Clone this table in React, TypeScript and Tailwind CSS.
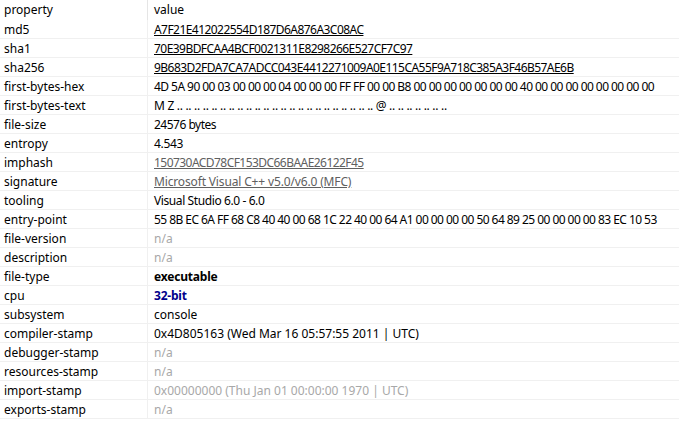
import React from "react";

type Row = { k: string; v: string; cls?: string };

const HEX = "tracking-[-0.55px]";
const NA = "text-[#a8a8a8]";

const rows: Row[] = [
  { k: "md5", v: "A7F21E412022554D187D6A876A3C08AC", cls: `underline text-black ${HEX}` },
  { k: "sha1", v: "70E39BDFCAA4BCF0021311E8298266E527CF7C97", cls: `underline text-black ${HEX}` },
  { k: "sha256", v: "9B683D2FDA7CA7ADCC043E4412271009A0E115CA55F9A718C385A3F46B57AE6B", cls: `underline text-black ${HEX}` },
  { k: "first-bytes-hex", v: "4D 5A 90 00 03 00 00 00 04 00 00 00 FF FF 00 00 B8 00 00 00 00 00 00 00 40 00 00 00 00 00 00 00 00", cls: HEX },
  { k: "first-bytes-text", v: "M Z .. .. .. .. .. .. .. .. .. .. .. .. .. .. .. .. .. .. .. .. .. .. .. @ .. .. .. .. .. .. ..", cls: "tracking-[-0.3px]" },
  { k: "file-size", v: "24576 bytes", cls: "tracking-[-0.5px]" },
  { k: "entropy", v: "4.543", cls: "tracking-[-0.3px]" },
  { k: "imphash", v: "150730ACD78CF153DC66BAAE26122F45", cls: `underline text-[#606060] ${HEX}` },
  { k: "signature", v: "Microsoft Visual C++ v5.0/v6.0 (MFC)", cls: "underline text-[#606060] tracking-[-0.15px]" },
  { k: "tooling", v: "Visual Studio 6.0 - 6.0", cls: "tracking-[-0.4px]" },
  { k: "entry-point", v: "55 8B EC 6A FF 68 C8 40 40 00 68 1C 22 40 00 64 A1 00 00 00 00 50 64 89 25 00 00 00 00 83 EC 10 53", cls: HEX },
  { k: "file-version", v: "n/a", cls: NA },
  { k: "description", v: "n/a", cls: NA },
  { k: "file-type", v: "executable", cls: "font-bold text-black tracking-[-0.2px]" },
  { k: "cpu", v: "32-bit", cls: "font-bold text-[#00008b] tracking-[-0.2px]" },
  { k: "subsystem", v: "console" },
  { k: "compiler-stamp", v: "0x4D805163 (Wed Mar 16 05:57:55 2011 | UTC)" },
  { k: "debugger-stamp", v: "n/a", cls: NA },
  { k: "resources-stamp", v: "n/a", cls: NA },
  { k: "import-stamp", v: "0x00000000 (Thu Jan 01 00:00:00 1970 | UTC)", cls: NA },
  { k: "exports-stamp", v: "n/a", cls: NA },
];

export default function App() {
  return (
    <div
      className="w-[679px] h-[426px] bg-white overflow-hidden text-[12px] text-black"
      style={{ fontFamily: '"Noto Sans", "Open Sans", sans-serif' }}
    >
      <div className="flex h-[20px]">
        <div className="w-[148px] shrink-0 pl-[4px] pt-[1px] border-r border-[#e5e5e5] leading-[18px]">property</div>
        <div className="pl-[6px] pt-[1px] leading-[18px]">value</div>
      </div>
      {rows.map((r) => (
        <div key={r.k} className="flex h-[19px] border-b border-[#f0f0f0]">
          <div className="w-[148px] shrink-0 pl-[4px] pt-[2px] border-r border-[#f0f0f0] leading-[16px] whitespace-nowrap">
            {r.k}
          </div>
          <div className={`pl-[6px] pt-[2px] leading-[16px] whitespace-nowrap ${r.cls ?? ""}`}>{r.v}</div>
        </div>
      ))}
    </div>
  );
}
